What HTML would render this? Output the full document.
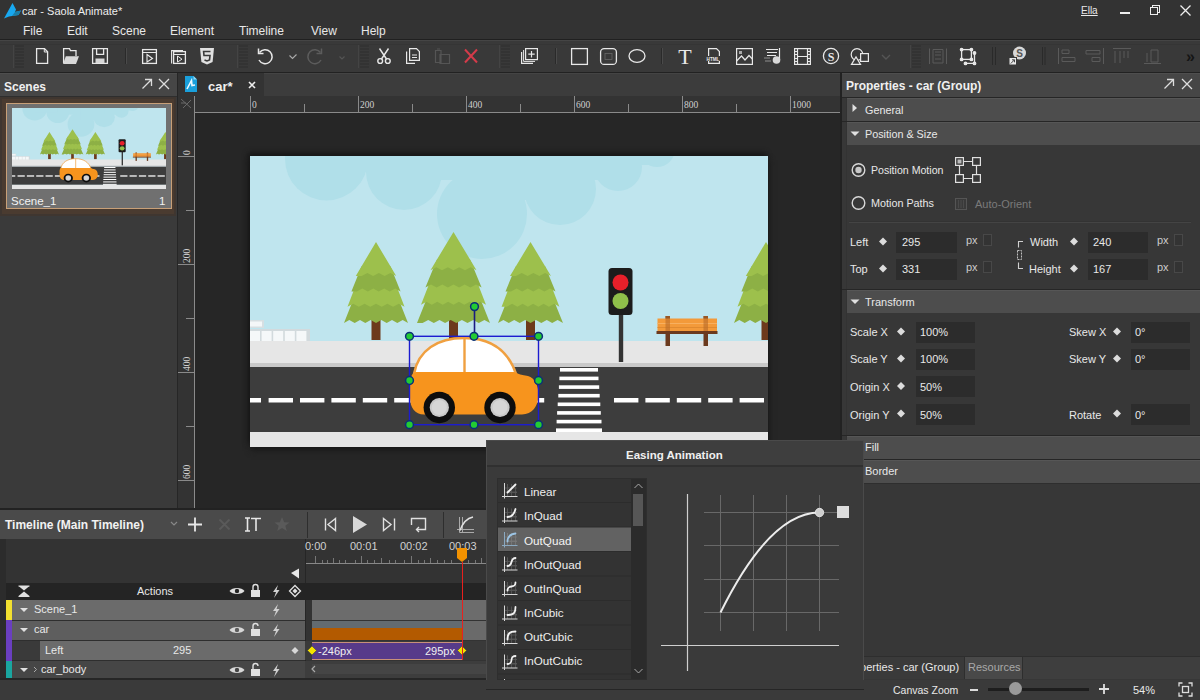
<!DOCTYPE html>
<html><head><meta charset="utf-8">
<style>
*{margin:0;padding:0;box-sizing:border-box}
html,body{width:1200px;height:700px;overflow:hidden;background:#333;font-family:"Liberation Sans",sans-serif;color:#e8e8e8;font-size:12px}
.a{position:absolute}
.t{position:absolute;white-space:nowrap;line-height:1}
svg{position:absolute;overflow:visible}
.b{font-weight:bold}
</style></head><body>
<!-- ===== title + menu ===== -->
<div class="a" style="left:0;top:0;width:1200px;height:40px;background:#333"></div>
<svg style="left:0;top:0" width="24" height="20"><path d="M12.5,3 L16,9.5 L15,12 L21,10.5 L18.5,15 L9,16.5 L4,18.5 Z" fill="#18a8f0"/><path d="M15,12 L21,10.5 L18.5,15 L12,16 Z" fill="#1b7fa8"/></svg>
<div class="t" style="left:22px;top:6px;font-size:11px;color:#eee">car - Saola Animate*</div>
<div class="t" style="left:23px;top:25px;font-size:12px">File</div>
<div class="t" style="left:67px;top:25px;font-size:12px">Edit</div>
<div class="t" style="left:112px;top:25px;font-size:12px">Scene</div>
<div class="t" style="left:170px;top:25px;font-size:12px">Element</div>
<div class="t" style="left:239px;top:25px;font-size:12px">Timeline</div>
<div class="t" style="left:311px;top:25px;font-size:12px">View</div>
<div class="t" style="left:361px;top:25px;font-size:12px">Help</div>
<div class="t" style="left:1081px;top:6px;font-size:10px;text-decoration:underline">Ella</div>
<div class="a" style="left:1120px;top:12px;width:10px;height:2px;background:#eee"></div>
<svg style="left:1150px;top:5px" width="11" height="11"><rect x="2.5" y="0.5" width="7" height="7" fill="none" stroke="#eee"/><rect x="0.5" y="2.5" width="7" height="7" fill="#333" stroke="#eee"/></svg>
<svg style="left:1180px;top:5px" width="11" height="11"><path d="M0.5,0.5 L10.5,10.5 M10.5,0.5 L0.5,10.5" stroke="#eee" stroke-width="1.3"/></svg>
<div class="a" style="left:0;top:39px;width:1200px;height:1px;background:#202020"></div>

<!-- ===== toolbar ===== -->
<div class="a" style="left:0;top:40px;width:1200px;height:33px;background:#393939;border-top:1px solid #454545;border-bottom:1px solid #222"></div>
<div class="a" style="left:0;top:44px;width:1200px;height:1px;background:#353535"></div>
<svg style="left:0;top:40px" width="1200" height="32" viewBox="0 40 1200 32">
<rect x="13" y="45" width="1" height="23" fill="#444444"/>
<rect x="15" y="45" width="9" height="23" fill="#333333"/>
<rect x="15" y="47" width="9" height="1" fill="#393939"/>
<rect x="15" y="50" width="9" height="1" fill="#393939"/>
<rect x="15" y="53" width="9" height="1" fill="#393939"/>
<rect x="15" y="56" width="9" height="1" fill="#393939"/>
<rect x="15" y="59" width="9" height="1" fill="#393939"/>
<rect x="15" y="62" width="9" height="1" fill="#393939"/>
<rect x="15" y="65" width="9" height="1" fill="#393939"/>
<rect x="237" y="45" width="1" height="23" fill="#444444"/>
<rect x="239" y="45" width="9" height="23" fill="#333333"/>
<rect x="239" y="47" width="9" height="1" fill="#393939"/>
<rect x="239" y="50" width="9" height="1" fill="#393939"/>
<rect x="239" y="53" width="9" height="1" fill="#393939"/>
<rect x="239" y="56" width="9" height="1" fill="#393939"/>
<rect x="239" y="59" width="9" height="1" fill="#393939"/>
<rect x="239" y="62" width="9" height="1" fill="#393939"/>
<rect x="239" y="65" width="9" height="1" fill="#393939"/>
<rect x="358" y="45" width="1" height="23" fill="#444444"/>
<rect x="360" y="45" width="9" height="23" fill="#333333"/>
<rect x="360" y="47" width="9" height="1" fill="#393939"/>
<rect x="360" y="50" width="9" height="1" fill="#393939"/>
<rect x="360" y="53" width="9" height="1" fill="#393939"/>
<rect x="360" y="56" width="9" height="1" fill="#393939"/>
<rect x="360" y="59" width="9" height="1" fill="#393939"/>
<rect x="360" y="62" width="9" height="1" fill="#393939"/>
<rect x="360" y="65" width="9" height="1" fill="#393939"/>
<rect x="499" y="45" width="1" height="23" fill="#444444"/>
<rect x="501" y="45" width="9" height="23" fill="#333333"/>
<rect x="501" y="47" width="9" height="1" fill="#393939"/>
<rect x="501" y="50" width="9" height="1" fill="#393939"/>
<rect x="501" y="53" width="9" height="1" fill="#393939"/>
<rect x="501" y="56" width="9" height="1" fill="#393939"/>
<rect x="501" y="59" width="9" height="1" fill="#393939"/>
<rect x="501" y="62" width="9" height="1" fill="#393939"/>
<rect x="501" y="65" width="9" height="1" fill="#393939"/>
<rect x="910" y="45" width="1" height="23" fill="#444444"/>
<rect x="912" y="45" width="9" height="23" fill="#333333"/>
<rect x="912" y="47" width="9" height="1" fill="#393939"/>
<rect x="912" y="50" width="9" height="1" fill="#393939"/>
<rect x="912" y="53" width="9" height="1" fill="#393939"/>
<rect x="912" y="56" width="9" height="1" fill="#393939"/>
<rect x="912" y="59" width="9" height="1" fill="#393939"/>
<rect x="912" y="62" width="9" height="1" fill="#393939"/>
<rect x="912" y="65" width="9" height="1" fill="#393939"/>
<g fill="none" stroke="#e8e8e8" stroke-width="1.3">
<!-- grip -->

<!-- new -->
<path d="M36.6,48.6 H44.5 L47.6,51.8 V63.4 H36.6 Z"/>
<path d="M44.3,48.6 V52 H47.6" stroke-width="1"/>
<!-- open -->
<path d="M63.6,63 V48.6 H69.5 L70.5,50.6 H76 V56"/>
<path d="M63,64 L65.8,56.2 H79 L76,64 Z" fill="#d8d8d8" stroke="none"/>
<!-- save -->
<path d="M92.6,48.6 H107.4 V63.4 H92.6 Z"/>
<path d="M96.6,48.6 V54.4 H103.6 V48.6"/>
<rect x="95.5" y="58.5" width="9" height="4.5" fill="#d8d8d8" stroke="none"/>
<path d="M125.5,48 V64" stroke="#2a2a2a" stroke-width="1"/><path d="M126.5,48 V64" stroke="#4a4a4a" stroke-width="1"/>
<!-- preview -->
<rect x="142.6" y="49.6" width="13.8" height="13.8"/>
<path d="M142.6,52.5 H156.4" stroke-width="1"/>
<path d="M147,54.5 L152.5,58.5 L147,62 Z" stroke-width="1.1"/>
<!-- preview2 -->
<path d="M171.6,63.4 V50.6 H183" stroke-width="1.1"/>
<rect x="173.6" y="51.6" width="11.8" height="11.8"/>
<path d="M173.6,54.5 H185.4" stroke-width="1"/>
<path d="M177.5,56 L182,59.2 L177.5,62 Z" stroke-width="1"/>
<!-- html5 -->
<path d="M200,48 H214 L212.6,62 L207,64.5 L201.4,62 Z" fill="#e0e0e0" stroke="none"/>
<path d="M210.5,51.5 H203.6 L204,55.5 H210 L209.5,60 L207,61 L204.5,60" stroke="#3a3a3a" stroke-width="1.6"/>
<!-- undo -->
<path d="M259.5,52.5 A7,7 0 1 1 259,60" stroke-width="1.5"/>
<path d="M258.5,48.5 V53.5 H263.5" stroke-width="1.5"/>
<path d="M289.5,55.5 L292.5,58.5 L296.5,54.5" stroke="#aaa" stroke-width="1.1"/>
<!-- redo disabled -->
<path d="M320.5,52.5 A7,7 0 1 0 321,60" stroke="#5c5c5c" stroke-width="1.5"/>
<path d="M321.5,48.5 V53.5 H316.5" stroke="#5c5c5c" stroke-width="1.5"/>
<path d="M339.5,56.5 L342,59 L344.5,56.5" stroke="#555" stroke-width="1.1"/>

<!-- cut -->
<path d="M379.5,48.5 L386.5,59 M388.5,48.5 L381.5,59" stroke-width="1.4"/>
<circle cx="380.2" cy="61" r="2.4" stroke-width="1.4"/>
<circle cx="387.8" cy="61" r="2.4" stroke-width="1.4"/>
<!-- copy -->
<path d="M406.6,51.5 V63.4 H415" stroke-width="1.2"/>
<path d="M409.6,48.6 H416.5 L419.4,51.5 V60.4 H409.6 Z" stroke-width="1.2"/>
<path d="M412,55 H417 M412,57.5 H417" stroke-width="1"/>
<!-- paste disabled -->
<path d="M435.5,50.5 H441 V62.5 H435.5 Z M440,54.5 H449.5 V63.5 H440 Z M437,49 H440" stroke="#555" stroke-width="1.2"/>
<!-- delete -->
<path d="M465,49.5 L477,62.5 M477,49.5 L465,62.5" stroke="#d43b4a" stroke-width="2"/>

<!-- duplicate -->
<path d="M521.6,52 V63.4 H533" stroke-width="1.2"/>
<path d="M523.6,50 V61.4 H535" stroke-width="1"/>
<rect x="525.6" y="48.6" width="11.8" height="11" stroke-width="1.2"/>
<path d="M531.5,51 V57.5 M528.3,54.2 H534.7" stroke-width="1.2"/>
<path d="M555.5,48 V64" stroke="#2a2a2a" stroke-width="1"/><path d="M556.5,48 V64" stroke="#4a4a4a" stroke-width="1"/>
<!-- rect -->
<rect x="571.6" y="48.6" width="15.8" height="15.8"/>
<!-- round rect -->
<rect x="600.6" y="48.6" width="15.8" height="15.8" rx="3.5"/>
<rect x="605" y="53.5" width="7" height="6" stroke="#666" stroke-width="0.8"/>
<!-- ellipse -->
<ellipse cx="637" cy="56" rx="8" ry="6.3"/>
<path d="M661.5,48 V64" stroke="#2a2a2a" stroke-width="1"/><path d="M662.5,48 V64" stroke="#4a4a4a" stroke-width="1"/>
</g>
<!-- T -->
<text x="685" y="64" font-family="Liberation Serif" font-size="22" fill="#e8e8e8" text-anchor="middle">T</text>
<g fill="none" stroke="#e8e8e8" stroke-width="1.2">
<!-- html doc -->
<path d="M708.6,63.4 V48.6 H716.5 L719.4,51.5 V63.4 Z"/>
<rect x="705" y="56" width="16" height="5" fill="#3a3a3a" stroke="none"/>
<text x="713" y="60.6" font-family="Liberation Sans" font-size="4.6" font-weight="bold" fill="#e8e8e8" stroke="none" text-anchor="middle">HTML</text>
<!-- image -->
<rect x="736.6" y="48.6" width="15.8" height="15.8"/>
<rect x="739" y="51" width="3" height="3" fill="#aaa" stroke="none"/>
<path d="M736.6,61 L741.5,56 L745,60 L749,55.5 L752.4,59" />
<!-- audio -->
<path d="M766,49.5 H778 M767,52.5 H777 M767,55.5 H776 M779.5,48 V60" stroke-width="1.2"/>
<circle cx="776.5" cy="60" r="3.8" fill="#d8d8d8" stroke="none"/>
<path d="M764,58 H770 M765,61 H771" stroke-width="0.9" stroke="#999"/>
<!-- video -->
<rect x="794.6" y="48.6" width="15.8" height="15.8"/>
<path d="M797.5,48.6 V64.4 M807.5,48.6 V64.4 M797.5,56.5 H807.5"/>
<path d="M794.6,51.5 H797.5 M794.6,54.5 H797.5 M794.6,58.5 H797.5 M794.6,61.5 H797.5 M807.5,51.5 H810.4 M807.5,54.5 H810.4 M807.5,58.5 H810.4 M807.5,61.5 H810.4" stroke-width="1"/>
<!-- symbol -->
<circle cx="831" cy="56" r="7.6" stroke-width="1.3"/>
</g>
<text x="831" y="60.5" font-family="Liberation Serif" font-size="12" font-weight="bold" fill="#e8e8e8" text-anchor="middle">S</text>
<g fill="none" stroke="#e8e8e8" stroke-width="1.2">
<!-- shapes -->
<circle cx="857" cy="54.5" r="5.8"/>
<rect x="860.6" y="53.6" width="7.8" height="7.8" fill="#3a3a3a"/>
<path d="M851.5,64.4 L856,57 L860.5,64.4 Z" fill="#3a3a3a"/>
<path d="M882,55 L886,59 L890,55" stroke="#555" stroke-width="1.4"/>

<!-- disabled icon -->
<path d="M929.5,48.5 V64 M946.5,48.5 V64 M933,49.5 H943 V63 H933 Z M935,52 H941 M935,55 H941 M935,59 H941" stroke="#5a5a5a" stroke-width="1"/>
<!-- transform -->
<rect x="961.6" y="49.6" width="9.8" height="9.8" stroke-width="1.3"/>
<path d="M974.5,53.5 V63.4 H965.5" stroke-width="1.3"/>
<circle cx="961.6" cy="49.6" r="1.3" fill="#e8e8e8"/><circle cx="971.4" cy="49.6" r="1.3" fill="#e8e8e8"/><circle cx="961.6" cy="59.4" r="1.3" fill="#e8e8e8"/><circle cx="971.4" cy="59.4" r="1.3" fill="#e8e8e8"/><circle cx="974.5" cy="53" r="1.3" fill="#e8e8e8"/><circle cx="974.5" cy="63.4" r="1.3" fill="#e8e8e8"/><circle cx="965.5" cy="63.4" r="1.3" fill="#e8e8e8"/>
<path d="M992.5,47 V65 M995.5,47 V65" stroke="#2a2a2a" stroke-width="1"/>
<!-- symbol link -->
<circle cx="1019.5" cy="53" r="6.5" fill="#d8d8d8" stroke="none"/>
<text x="1019.5" y="57" font-family="Liberation Sans" font-size="10" font-weight="bold" fill="#555" stroke="none" text-anchor="middle">S</text>
<rect x="1009" y="57.5" width="7.5" height="7.5" fill="#e8e8e8" stroke="#3a3a3a" stroke-width="1"/>
<path d="M1010.8,63.5 L1014.5,59.8 M1012,59.8 H1014.5 V62.3" stroke="#444" stroke-width="1"/>
<path d="M1042.5,47 V65 M1045,47 V65" stroke="#2a2a2a" stroke-width="1"/>
<!-- align disabled -->
<g stroke="#5a5a5a" stroke-width="1">
<path d="M1058.5,48 V64 M1062,50 H1069 V53.5 H1062 Z M1062,57.5 H1075 V61.5 H1062 Z"/>
<path d="M1103.5,48 V64 M1086,50.5 H1100 V54 H1086 Z M1092,57.5 H1100 V61.5 H1092 Z"/>
<path d="M1113,48.5 H1131 M1115,51 V63 M1120,51 V63 M1124,51 V58 M1128,51 V58"/>
<path d="M1144,63.5 H1161 M1147,53 V62 M1151,50 V62 H1158 V50 Z"/>
</g>
</g>
<text x="1186" y="62" font-family="Liberation Sans" font-size="16" font-weight="bold" fill="#151515">»</text>
</svg>


<!-- scenes panel -->
<div class="a" style="left:0;top:73px;width:177px;height:435px;background:#3a3a3a"></div>
<div class="a" style="left:0;top:73px;width:177px;height:23px;background:#464646;border-top:1px solid #4e4e4e"></div>
<div class="t b" style="left:4px;top:81px;font-size:12px;color:#f0f0f0">Scenes</div>
<svg style="left:141px;top:78px" width="12" height="12"><path d="M1.5,10.5 L10.5,1.5 M4,1.5 H10.5 V8" fill="none" stroke="#ddd" stroke-width="1.3"/></svg>
<svg style="left:158px;top:78px" width="12" height="12"><path d="M1,1 L11,11 M11,1 L1,11" fill="none" stroke="#ddd" stroke-width="1.3"/></svg>
<div class="a" style="left:0;top:96px;width:177px;height:1px;background:#2e2e2e"></div>
<div class="a" style="left:0;top:97px;width:176px;height:119px;background:#3f3630"></div>
<div class="a" style="left:2px;top:99px;width:172px;height:115px;background:#4a3b30"></div>
<div class="a" style="left:6px;top:103px;width:166px;height:106px;border:1px solid #c8a078;background:#707070"></div>
<svg style="left:12px;top:108px" width="154" height="81" viewBox="250 156 518 291" preserveAspectRatio="none"><svg x="250" y="156" width="518" height="291" viewBox="250 156 518 291" style="overflow:hidden"><rect x="250" y="156" width="518" height="291" fill="#bfe5ee"/><circle cx="326.5" cy="159" r="41.5" fill="#b0dfe9"/><circle cx="404" cy="172" r="38" fill="#b0dfe9"/><circle cx="482" cy="214" r="45" fill="#b0dfe9"/><circle cx="560" cy="189" r="36" fill="#b0dfe9"/><circle cx="618" cy="167" r="24" fill="#b0dfe9"/><circle cx="657" cy="149" r="18" fill="#b0dfe9"/><rect x="326" y="156" width="78" height="16" fill="#b0dfe9"/><rect x="404" y="156" width="78" height="24" fill="#b0dfe9"/><rect x="482" y="156" width="78" height="44" fill="#b0dfe9"/><rect x="560" y="156" width="58" height="24" fill="#b0dfe9"/><rect x="618" y="156" width="39" height="9" fill="#b0dfe9"/><rect x="371.5" y="318" width="9" height="22" fill="#6d3a1c"/><rect x="449.0" y="318" width="9" height="22" fill="#6d3a1c"/><rect x="526.0" y="318" width="9" height="22" fill="#6d3a1c"/><rect x="761.5" y="318" width="9" height="22" fill="#6d3a1c"/><polygon fill="#8db045" points="353.6,298.7 398.4,298.7 408.0,323.0 402.7,320.0 397.3,323.0 392.0,320.0 386.7,323.0 381.3,320.0 376.0,323.0 370.7,320.0 365.3,323.0 360.0,320.0 354.7,323.0 349.3,320.0 344.0,323.0"/><polygon fill="#9dc04c" points="356.8,282.5 395.2,282.5 404.5,306.8 398.8,303.8 393.1,306.8 387.4,303.8 381.7,306.8 376.0,303.8 370.3,306.8 364.6,303.8 358.9,306.8 353.2,303.8 347.5,306.8"/><polygon fill="#8db045" points="361.6,266.3 390.4,266.3 400.6,291.4 395.2,288.4 389.7,291.4 384.2,288.4 378.7,291.4 373.3,288.4 367.8,291.4 362.3,288.4 356.8,291.4 351.4,291.4"/><polygon fill="#9dc04c" points="376.0,242.0 376.0,242.0 396.2,276.0 390.4,273.0 384.6,276.0 378.9,273.0 373.1,276.0 367.4,273.0 361.6,276.0 355.8,276.0"/><polygon fill="#8db045" points="427.9,295.7 479.1,295.7 490.0,323.0 484.4,320.0 478.8,323.0 473.2,320.0 467.5,323.0 461.9,320.0 456.3,323.0 450.7,320.0 445.1,323.0 439.5,320.0 433.8,323.0 428.2,320.0 422.6,323.0 417.0,323.0"/><polygon fill="#9dc04c" points="431.6,277.5 475.4,277.5 486.0,304.8 480.6,301.8 475.2,304.8 469.7,301.8 464.3,304.8 458.9,301.8 453.5,304.8 448.1,301.8 442.7,304.8 437.3,301.8 431.8,304.8 426.4,301.8 421.0,304.8"/><polygon fill="#8db045" points="437.1,259.3 469.9,259.3 481.6,287.5 476.0,284.5 470.4,287.5 464.7,284.5 459.1,287.5 453.5,284.5 447.9,287.5 442.3,284.5 436.6,287.5 431.0,284.5 425.4,287.5"/><polygon fill="#9dc04c" points="453.5,232.0 453.5,232.0 476.5,270.2 470.7,267.2 465.0,270.2 459.2,267.2 453.5,270.2 447.8,267.2 442.0,270.2 436.3,267.2 430.5,270.2"/><polygon fill="#8db045" points="507.8,298.7 553.2,298.7 563.0,323.0 557.6,320.0 552.2,323.0 546.8,320.0 541.3,323.0 535.9,320.0 530.5,323.0 525.1,320.0 519.7,323.0 514.2,320.0 508.8,323.0 503.4,320.0 498.0,323.0"/><polygon fill="#9dc04c" points="511.0,282.5 550.0,282.5 559.4,306.8 554.2,303.8 548.9,306.8 543.6,303.8 538.4,306.8 533.1,303.8 527.9,306.8 522.6,303.8 517.4,306.8 512.1,303.8 506.8,306.8 501.6,306.8"/><polygon fill="#8db045" points="515.9,266.3 545.1,266.3 555.5,291.4 550.0,288.4 544.4,291.4 538.8,288.4 533.3,291.4 527.7,288.4 522.2,291.4 516.6,288.4 511.0,291.4 505.5,291.4"/><polygon fill="#9dc04c" points="530.5,242.0 530.5,242.0 551.0,276.0 545.1,273.0 539.3,276.0 533.4,273.0 527.6,276.0 521.7,273.0 515.9,276.0 510.0,276.0"/><polygon fill="#8db045" points="743.6,298.7 788.4,298.7 798.0,323.0 792.7,320.0 787.3,323.0 782.0,320.0 776.7,323.0 771.3,320.0 766.0,323.0 760.7,320.0 755.3,323.0 750.0,320.0 744.7,323.0 739.3,320.0 734.0,323.0"/><polygon fill="#9dc04c" points="746.8,282.5 785.2,282.5 794.5,306.8 788.8,303.8 783.1,306.8 777.4,303.8 771.7,306.8 766.0,303.8 760.3,306.8 754.6,303.8 748.9,306.8 743.2,303.8 737.5,306.8"/><polygon fill="#8db045" points="751.6,266.3 780.4,266.3 790.6,291.4 785.2,288.4 779.7,291.4 774.2,288.4 768.7,291.4 763.3,288.4 757.8,291.4 752.3,288.4 746.8,291.4 741.4,291.4"/><polygon fill="#9dc04c" points="766.0,242.0 766.0,242.0 786.2,276.0 780.4,273.0 774.6,276.0 768.9,273.0 763.1,276.0 757.4,273.0 751.6,276.0 745.8,276.0"/><rect x="250" y="320" width="14" height="8" fill="#d6dfe2"/><rect x="250" y="321.5" width="12" height="5" fill="#f4f7f8"/><rect x="250" y="329" width="60" height="16" fill="#d2dadd"/><rect x="250.0" y="331" width="10" height="12" fill="#f5f8f9"/><rect x="261.6" y="331" width="10" height="12" fill="#f5f8f9"/><rect x="273.2" y="331" width="10" height="12" fill="#f5f8f9"/><rect x="284.8" y="331" width="10" height="12" fill="#f5f8f9"/><rect x="296.4" y="331" width="10" height="12" fill="#f5f8f9"/><rect x="250" y="341" width="518" height="23" fill="#e6e6e6"/><rect x="250" y="363" width="518" height="4" fill="#c9c9c9"/><rect x="250" y="367" width="518" height="65" fill="#3d3d3d"/><rect x="250" y="432" width="518" height="15" fill="#e6e6e6"/><rect x="250" y="398" width="11" height="4.5" fill="#fff"/><rect x="268.6" y="398" width="24.4" height="4.5" fill="#fff"/><rect x="300.0" y="398" width="24.4" height="4.5" fill="#fff"/><rect x="331.4" y="398" width="24.4" height="4.5" fill="#fff"/><rect x="362.8" y="398" width="24.4" height="4.5" fill="#fff"/><rect x="394.2" y="398" width="24.4" height="4.5" fill="#fff"/><rect x="425.6" y="398" width="24.4" height="4.5" fill="#fff"/><rect x="457.0" y="398" width="24.4" height="4.5" fill="#fff"/><rect x="488.4" y="398" width="24.4" height="4.5" fill="#fff"/><rect x="519.8" y="398" width="24.4" height="4.5" fill="#fff"/><rect x="614.0" y="398" width="24.4" height="4.5" fill="#fff"/><rect x="645.4" y="398" width="24.4" height="4.5" fill="#fff"/><rect x="676.8" y="398" width="24.4" height="4.5" fill="#fff"/><rect x="708.2" y="398" width="24.4" height="4.5" fill="#fff"/><rect x="739.6" y="398" width="24.4" height="4.5" fill="#fff"/><rect x="560.0" y="368.0" width="38.0" height="3.6" fill="#fff"/><rect x="559.4" y="376.6" width="39.1" height="3.6" fill="#fff"/><rect x="558.9" y="385.3" width="40.3" height="3.6" fill="#fff"/><rect x="558.3" y="393.9" width="41.4" height="3.6" fill="#fff"/><rect x="557.7" y="402.5" width="42.6" height="3.6" fill="#fff"/><rect x="557.1" y="411.1" width="43.7" height="3.6" fill="#fff"/><rect x="556.6" y="419.8" width="44.9" height="3.6" fill="#fff"/><rect x="556.0" y="428.4" width="46.0" height="3.6" fill="#fff"/><rect x="618.8" y="300" width="4.4" height="62" fill="#333"/><rect x="608.5" y="268" width="24" height="47" rx="3.5" fill="#1c1c1c"/><circle cx="620.5" cy="282.5" r="8" fill="#e8202a"/><circle cx="620.5" cy="301" r="8" fill="#8fbf4a"/><rect x="665.5" y="316" width="4.5" height="30" fill="#6b3a1e"/><rect x="703.5" y="316" width="4.5" height="30" fill="#6b3a1e"/><rect x="657.5" y="318.5" width="59.5" height="13" fill="#f39a3a"/><rect x="657.5" y="323" width="59.5" height="1" fill="#f7b060"/><rect x="657.5" y="327" width="59.5" height="1" fill="#e08a30"/><rect x="665.5" y="316" width="4.5" height="17" fill="#b86a28" opacity="0.6"/><rect x="703.5" y="316" width="4.5" height="17" fill="#b86a28" opacity="0.6"/><rect x="656.5" y="331" width="61" height="3" fill="#6b3a1e"/><path d="M414,374 C418,350 438,338 464,338 C490,338 508,350 516,374 Z" fill="#fff" stroke="#f0a040" stroke-width="2.5"/><rect x="463.3" y="338" width="2.4" height="36" fill="#f0a040"/><path d="M416,372 L514,372 C518,374 522,375 528,376 C535,378 538.5,386 538.5,395 C538.5,406 532,414.5 522,414.5 L424,414.5 C415,414.5 410,407 410,398 L410,384 C410,377 412,373 416,372 Z" fill="#f7941d"/><circle cx="439.3" cy="407.5" r="15.7" fill="#0d0d0d"/><circle cx="439.3" cy="407.5" r="9.6" fill="#c9c9c9"/><circle cx="439.3" cy="407.5" r="7.5" fill="#d6d6d6"/><circle cx="500" cy="407.5" r="15.7" fill="#0d0d0d"/><circle cx="500" cy="407.5" r="9.6" fill="#c9c9c9"/><circle cx="500" cy="407.5" r="7.5" fill="#d6d6d6"/></svg></svg>
<div class="t" style="left:11px;top:196px;font-size:11.5px;color:#f2f2f2">Scene_1</div>
<div class="t" style="left:159px;top:196px;font-size:11.5px;color:#f2f2f2">1</div>

<!-- doc tab bar -->
<div class="a" style="left:177px;top:73px;width:1px;height:435px;background:#262626"></div>
<div class="a" style="left:178px;top:73px;width:663px;height:23px;background:#3c3c3c;border-top:1px solid #444"></div>
<div class="a" style="left:178px;top:73px;width:86px;height:23px;background:#333"></div>
<svg style="left:185px;top:76px" width="12" height="16" viewBox="0 0 12 16"><path d="M0,0 H8.5 L12,3.5 V16 H0 Z" fill="#1aa0dc"/><path d="M8.5,0 V3.5 H12" fill="#8fd6f5"/><path d="M2,13 L6.5,4.5 L7,9.5 L10,9" fill="none" stroke="#eaf8ff" stroke-width="1.6"/></svg>
<div class="t b" style="left:208px;top:80px;font-size:13px;color:#f0f0f0">car*</div>
<svg style="left:248px;top:81px" width="8" height="8"><path d="M1,1 L7,7 M7,1 L1,7" stroke="#eee" stroke-width="1.6"/></svg>
<!-- rulers -->
<div class="a" style="left:178px;top:96px;width:663px;height:16px;background:#333"></div>
<div class="a" style="left:178px;top:96px;width:17px;height:412px;background:#333"></div>
<div class="a" style="left:195px;top:112px;width:646px;height:1px;background:#8a8a8a"></div>
<div class="a" style="left:194px;top:96px;width:1px;height:412px;background:#8a8a8a"></div>
<svg style="left:0;top:0" width="1200" height="700">
<g stroke="#8a8a8a" stroke-width="1">
<path d="M181,99 L191,108 M183,108 L191,100 M181,103 H186" stroke="#6a6a6a"/>
<path d="M250.5,96 V112 M358.5,96 V112 M466.5,96 V112 M574.5,96 V112 M682.5,96 V112 M790.5,96 V112"/>
<path d="M304.5,104 V112 M412.5,104 V112 M520.5,104 V112 M628.5,104 V112 M736.5,104 V112"/>
<path d="M178,156.5 H194 M178,264.5 H194 M178,372.5 H194 M178,480.5 H194"/>
<path d="M186,210.5 H194 M186,318.5 H194 M186,426.5 H194"/>
</g>
<g font-family="Liberation Serif" font-size="9.5" fill="#cfcfcf">
<text x="252" y="108">0</text><text x="360" y="108">200</text><text x="468" y="108">400</text><text x="576" y="108">600</text><text x="684" y="108">800</text><text x="792" y="108">1000</text>
<text transform="translate(190,155) rotate(-90)">0</text>
<text transform="translate(190,263) rotate(-90)">200</text>
<text transform="translate(190,371) rotate(-90)">400</text>
<text transform="translate(190,479) rotate(-90)">600</text>
</g>
</svg>
<!-- canvas -->
<div class="a" style="left:195px;top:113px;width:646px;height:395px;background:#262626"></div>
<div class="a" style="left:250px;top:156px;width:518px;height:291px;box-shadow:-2px -3px 5px #161616, 1px 4px 6px #1c1c1c"></div>
<svg style="left:0;top:0" width="1200" height="700" viewBox="0 0 1200 700">
<svg x="250" y="156" width="518" height="291" viewBox="250 156 518 291" style="overflow:hidden"><rect x="250" y="156" width="518" height="291" fill="#bfe5ee"/><circle cx="326.5" cy="159" r="41.5" fill="#b0dfe9"/><circle cx="404" cy="172" r="38" fill="#b0dfe9"/><circle cx="482" cy="214" r="45" fill="#b0dfe9"/><circle cx="560" cy="189" r="36" fill="#b0dfe9"/><circle cx="618" cy="167" r="24" fill="#b0dfe9"/><circle cx="657" cy="149" r="18" fill="#b0dfe9"/><rect x="326" y="156" width="78" height="16" fill="#b0dfe9"/><rect x="404" y="156" width="78" height="24" fill="#b0dfe9"/><rect x="482" y="156" width="78" height="44" fill="#b0dfe9"/><rect x="560" y="156" width="58" height="24" fill="#b0dfe9"/><rect x="618" y="156" width="39" height="9" fill="#b0dfe9"/><rect x="371.5" y="318" width="9" height="22" fill="#6d3a1c"/><rect x="449.0" y="318" width="9" height="22" fill="#6d3a1c"/><rect x="526.0" y="318" width="9" height="22" fill="#6d3a1c"/><rect x="761.5" y="318" width="9" height="22" fill="#6d3a1c"/><polygon fill="#8db045" points="353.6,298.7 398.4,298.7 408.0,323.0 402.7,320.0 397.3,323.0 392.0,320.0 386.7,323.0 381.3,320.0 376.0,323.0 370.7,320.0 365.3,323.0 360.0,320.0 354.7,323.0 349.3,320.0 344.0,323.0"/><polygon fill="#9dc04c" points="356.8,282.5 395.2,282.5 404.5,306.8 398.8,303.8 393.1,306.8 387.4,303.8 381.7,306.8 376.0,303.8 370.3,306.8 364.6,303.8 358.9,306.8 353.2,303.8 347.5,306.8"/><polygon fill="#8db045" points="361.6,266.3 390.4,266.3 400.6,291.4 395.2,288.4 389.7,291.4 384.2,288.4 378.7,291.4 373.3,288.4 367.8,291.4 362.3,288.4 356.8,291.4 351.4,291.4"/><polygon fill="#9dc04c" points="376.0,242.0 376.0,242.0 396.2,276.0 390.4,273.0 384.6,276.0 378.9,273.0 373.1,276.0 367.4,273.0 361.6,276.0 355.8,276.0"/><polygon fill="#8db045" points="427.9,295.7 479.1,295.7 490.0,323.0 484.4,320.0 478.8,323.0 473.2,320.0 467.5,323.0 461.9,320.0 456.3,323.0 450.7,320.0 445.1,323.0 439.5,320.0 433.8,323.0 428.2,320.0 422.6,323.0 417.0,323.0"/><polygon fill="#9dc04c" points="431.6,277.5 475.4,277.5 486.0,304.8 480.6,301.8 475.2,304.8 469.7,301.8 464.3,304.8 458.9,301.8 453.5,304.8 448.1,301.8 442.7,304.8 437.3,301.8 431.8,304.8 426.4,301.8 421.0,304.8"/><polygon fill="#8db045" points="437.1,259.3 469.9,259.3 481.6,287.5 476.0,284.5 470.4,287.5 464.7,284.5 459.1,287.5 453.5,284.5 447.9,287.5 442.3,284.5 436.6,287.5 431.0,284.5 425.4,287.5"/><polygon fill="#9dc04c" points="453.5,232.0 453.5,232.0 476.5,270.2 470.7,267.2 465.0,270.2 459.2,267.2 453.5,270.2 447.8,267.2 442.0,270.2 436.3,267.2 430.5,270.2"/><polygon fill="#8db045" points="507.8,298.7 553.2,298.7 563.0,323.0 557.6,320.0 552.2,323.0 546.8,320.0 541.3,323.0 535.9,320.0 530.5,323.0 525.1,320.0 519.7,323.0 514.2,320.0 508.8,323.0 503.4,320.0 498.0,323.0"/><polygon fill="#9dc04c" points="511.0,282.5 550.0,282.5 559.4,306.8 554.2,303.8 548.9,306.8 543.6,303.8 538.4,306.8 533.1,303.8 527.9,306.8 522.6,303.8 517.4,306.8 512.1,303.8 506.8,306.8 501.6,306.8"/><polygon fill="#8db045" points="515.9,266.3 545.1,266.3 555.5,291.4 550.0,288.4 544.4,291.4 538.8,288.4 533.3,291.4 527.7,288.4 522.2,291.4 516.6,288.4 511.0,291.4 505.5,291.4"/><polygon fill="#9dc04c" points="530.5,242.0 530.5,242.0 551.0,276.0 545.1,273.0 539.3,276.0 533.4,273.0 527.6,276.0 521.7,273.0 515.9,276.0 510.0,276.0"/><polygon fill="#8db045" points="743.6,298.7 788.4,298.7 798.0,323.0 792.7,320.0 787.3,323.0 782.0,320.0 776.7,323.0 771.3,320.0 766.0,323.0 760.7,320.0 755.3,323.0 750.0,320.0 744.7,323.0 739.3,320.0 734.0,323.0"/><polygon fill="#9dc04c" points="746.8,282.5 785.2,282.5 794.5,306.8 788.8,303.8 783.1,306.8 777.4,303.8 771.7,306.8 766.0,303.8 760.3,306.8 754.6,303.8 748.9,306.8 743.2,303.8 737.5,306.8"/><polygon fill="#8db045" points="751.6,266.3 780.4,266.3 790.6,291.4 785.2,288.4 779.7,291.4 774.2,288.4 768.7,291.4 763.3,288.4 757.8,291.4 752.3,288.4 746.8,291.4 741.4,291.4"/><polygon fill="#9dc04c" points="766.0,242.0 766.0,242.0 786.2,276.0 780.4,273.0 774.6,276.0 768.9,273.0 763.1,276.0 757.4,273.0 751.6,276.0 745.8,276.0"/><rect x="250" y="320" width="14" height="8" fill="#d6dfe2"/><rect x="250" y="321.5" width="12" height="5" fill="#f4f7f8"/><rect x="250" y="329" width="60" height="16" fill="#d2dadd"/><rect x="250.0" y="331" width="10" height="12" fill="#f5f8f9"/><rect x="261.6" y="331" width="10" height="12" fill="#f5f8f9"/><rect x="273.2" y="331" width="10" height="12" fill="#f5f8f9"/><rect x="284.8" y="331" width="10" height="12" fill="#f5f8f9"/><rect x="296.4" y="331" width="10" height="12" fill="#f5f8f9"/><rect x="250" y="341" width="518" height="23" fill="#e6e6e6"/><rect x="250" y="363" width="518" height="4" fill="#c9c9c9"/><rect x="250" y="367" width="518" height="65" fill="#3d3d3d"/><rect x="250" y="432" width="518" height="15" fill="#e6e6e6"/><rect x="250" y="398" width="11" height="4.5" fill="#fff"/><rect x="268.6" y="398" width="24.4" height="4.5" fill="#fff"/><rect x="300.0" y="398" width="24.4" height="4.5" fill="#fff"/><rect x="331.4" y="398" width="24.4" height="4.5" fill="#fff"/><rect x="362.8" y="398" width="24.4" height="4.5" fill="#fff"/><rect x="394.2" y="398" width="24.4" height="4.5" fill="#fff"/><rect x="425.6" y="398" width="24.4" height="4.5" fill="#fff"/><rect x="457.0" y="398" width="24.4" height="4.5" fill="#fff"/><rect x="488.4" y="398" width="24.4" height="4.5" fill="#fff"/><rect x="519.8" y="398" width="24.4" height="4.5" fill="#fff"/><rect x="614.0" y="398" width="24.4" height="4.5" fill="#fff"/><rect x="645.4" y="398" width="24.4" height="4.5" fill="#fff"/><rect x="676.8" y="398" width="24.4" height="4.5" fill="#fff"/><rect x="708.2" y="398" width="24.4" height="4.5" fill="#fff"/><rect x="739.6" y="398" width="24.4" height="4.5" fill="#fff"/><rect x="560.0" y="368.0" width="38.0" height="3.6" fill="#fff"/><rect x="559.4" y="376.6" width="39.1" height="3.6" fill="#fff"/><rect x="558.9" y="385.3" width="40.3" height="3.6" fill="#fff"/><rect x="558.3" y="393.9" width="41.4" height="3.6" fill="#fff"/><rect x="557.7" y="402.5" width="42.6" height="3.6" fill="#fff"/><rect x="557.1" y="411.1" width="43.7" height="3.6" fill="#fff"/><rect x="556.6" y="419.8" width="44.9" height="3.6" fill="#fff"/><rect x="556.0" y="428.4" width="46.0" height="3.6" fill="#fff"/><rect x="618.8" y="300" width="4.4" height="62" fill="#333"/><rect x="608.5" y="268" width="24" height="47" rx="3.5" fill="#1c1c1c"/><circle cx="620.5" cy="282.5" r="8" fill="#e8202a"/><circle cx="620.5" cy="301" r="8" fill="#8fbf4a"/><rect x="665.5" y="316" width="4.5" height="30" fill="#6b3a1e"/><rect x="703.5" y="316" width="4.5" height="30" fill="#6b3a1e"/><rect x="657.5" y="318.5" width="59.5" height="13" fill="#f39a3a"/><rect x="657.5" y="323" width="59.5" height="1" fill="#f7b060"/><rect x="657.5" y="327" width="59.5" height="1" fill="#e08a30"/><rect x="665.5" y="316" width="4.5" height="17" fill="#b86a28" opacity="0.6"/><rect x="703.5" y="316" width="4.5" height="17" fill="#b86a28" opacity="0.6"/><rect x="656.5" y="331" width="61" height="3" fill="#6b3a1e"/><path d="M414,374 C418,350 438,338 464,338 C490,338 508,350 516,374 Z" fill="#fff" stroke="#f0a040" stroke-width="2.5"/><rect x="463.3" y="338" width="2.4" height="36" fill="#f0a040"/><path d="M416,372 L514,372 C518,374 522,375 528,376 C535,378 538.5,386 538.5,395 C538.5,406 532,414.5 522,414.5 L424,414.5 C415,414.5 410,407 410,398 L410,384 C410,377 412,373 416,372 Z" fill="#f7941d"/><circle cx="439.3" cy="407.5" r="15.7" fill="#0d0d0d"/><circle cx="439.3" cy="407.5" r="9.6" fill="#c9c9c9"/><circle cx="439.3" cy="407.5" r="7.5" fill="#d6d6d6"/><circle cx="500" cy="407.5" r="15.7" fill="#0d0d0d"/><circle cx="500" cy="407.5" r="9.6" fill="#c9c9c9"/><circle cx="500" cy="407.5" r="7.5" fill="#d6d6d6"/></svg>
<rect x="409.5" y="336.3" width="129" height="88.4" fill="none" stroke="#1c1cd0" stroke-width="1.4"/><line x1="474.5" y1="306.6" x2="474.5" y2="336.3" stroke="#1a1a80" stroke-width="1.6"/><circle cx="409.5" cy="336.3" r="3.9" fill="#22cc33" stroke="#0b2f78" stroke-width="1.5"/><circle cx="474" cy="336.3" r="3.9" fill="#22cc33" stroke="#0b2f78" stroke-width="1.5"/><circle cx="538.5" cy="336.3" r="3.9" fill="#22cc33" stroke="#0b2f78" stroke-width="1.5"/><circle cx="409.5" cy="380.5" r="3.9" fill="#22cc33" stroke="#0b2f78" stroke-width="1.5"/><circle cx="538.5" cy="380.5" r="3.9" fill="#22cc33" stroke="#0b2f78" stroke-width="1.5"/><circle cx="409.5" cy="424.7" r="3.9" fill="#22cc33" stroke="#0b2f78" stroke-width="1.5"/><circle cx="474" cy="424.7" r="3.9" fill="#22cc33" stroke="#0b2f78" stroke-width="1.5"/><circle cx="538.5" cy="424.7" r="3.9" fill="#22cc33" stroke="#0b2f78" stroke-width="1.5"/><circle cx="474.5" cy="306.6" r="3.9" fill="#22cc33" stroke="#0b2f78" stroke-width="1.5"/>
</svg>

<!-- properties panel -->
<div class="a" style="left:840px;top:73px;width:2px;height:607px;background:#222"></div>
<div class="a" style="left:842px;top:73px;width:358px;height:607px;background:#373737"></div>
<div class="a" style="left:842px;top:73px;width:358px;height:24px;background:#464646;border-top:1px solid #4e4e4e"></div>
<div class="t b" style="left:846px;top:80px;font-size:12px;color:#f0f0f0">Properties - car (Group)</div>
<svg style="left:1163px;top:78px" width="12" height="12"><path d="M1.5,10.5 L10.5,1.5 M4,1.5 H10.5 V8" fill="none" stroke="#ddd" stroke-width="1.3"/></svg>
<svg style="left:1181px;top:78px" width="12" height="12"><path d="M1,1 L11,11 M11,1 L1,11" fill="none" stroke="#ddd" stroke-width="1.3"/></svg>
<div class="a" style="left:842px;top:97px;width:358px;height:1px;background:#262626"></div>
<div class="a" style="left:846px;top:98px;width:1px;height:558px;background:#333"></div>
<!-- section headers -->
<div class="a" style="left:847px;top:98px;width:353px;height:23px;background:#4d4d4d;border-top:1px solid #565656"></div>
<div class="a" style="left:842px;top:121px;width:358px;height:1px;background:#262626"></div>
<div class="a" style="left:847px;top:122px;width:353px;height:23px;background:#4d4d4d;border-top:1px solid #565656"></div>
<svg style="left:850px;top:103px" width="10" height="10"><path d="M2.5,1 L7,5 L2.5,9 Z" fill="#e0e0e0"/></svg>
<svg style="left:850px;top:129px" width="10" height="10"><path d="M0.5,2.5 H9.5 L5,7 Z" fill="#e0e0e0"/></svg>
<div class="t" style="left:865px;top:105px;font-size:10.8px">General</div>
<div class="t" style="left:865px;top:129px;font-size:10.8px">Position &amp; Size</div>
<!-- radios -->
<svg style="left:850px;top:161px" width="18" height="18"><circle cx="8.5" cy="9" r="6.3" fill="#373737" stroke="#d8d8d8" stroke-width="1.4"/><circle cx="8.5" cy="9" r="3.2" fill="#c8c8c8"/></svg>
<svg style="left:850px;top:194px" width="18" height="18"><circle cx="8.5" cy="9" r="6.3" fill="#373737" stroke="#d8d8d8" stroke-width="1.4"/></svg>
<div class="t" style="left:871px;top:165px;font-size:10.6px">Position Motion</div>
<div class="t" style="left:871px;top:198px;font-size:10.8px">Motion Paths</div>
<svg style="left:954px;top:156px" width="28" height="28"><g fill="none" stroke="#e0e0e0" stroke-width="1.2"><rect x="1.6" y="1.6" width="7.8" height="7.8"/><rect x="18.6" y="1.6" width="7.8" height="7.8"/><rect x="1.6" y="18.6" width="7.8" height="7.8"/><rect x="18.6" y="18.6" width="7.8" height="7.8"/><path d="M9.4,5.5 H18.6 M9.4,22.5 H18.6 M5.5,9.4 V18.6 M22.5,9.4 V18.6"/></g><rect x="3.5" y="3.5" width="4" height="4" fill="#bbb"/></svg>
<svg style="left:954px;top:197px" width="14" height="14"><rect x="1.5" y="1.5" width="11" height="11" fill="#3a3a3a" stroke="#555" stroke-width="1"/><path d="M4.5,3 V11 M7,3 V11 M9.5,3 V11" stroke="#4a4a4a"/></svg>
<div class="t" style="left:975px;top:199px;font-size:11px;color:#7a7a7a">Auto-Orient</div>
<div class="a" style="left:849px;top:221px;width:342px;height:1px;background:#333"></div>
<div class="a" style="left:849px;top:222px;width:342px;height:1px;background:#444"></div>
<!-- left/top/width/height -->
<div class="t" style="left:850px;top:237px;font-size:11px">Left</div>
<div class="t" style="left:850px;top:264px;font-size:11px">Top</div>
<div class="t" style="left:1030px;top:237px;font-size:11px">Width</div>
<div class="t" style="left:1029px;top:264px;font-size:11px">Height</div>
<div class="a" style="left:896px;top:232px;width:61px;height:21px;background:#2c2c2c"></div>
<div class="a" style="left:896px;top:259px;width:61px;height:21px;background:#2c2c2c"></div>
<div class="a" style="left:1088px;top:232px;width:60px;height:21px;background:#2c2c2c"></div>
<div class="a" style="left:1088px;top:259px;width:60px;height:21px;background:#2c2c2c"></div>
<div class="t" style="left:902px;top:237px;font-size:11px">295</div>
<div class="t" style="left:902px;top:264px;font-size:11px">331</div>
<div class="t" style="left:1093px;top:237px;font-size:11px">240</div>
<div class="t" style="left:1093px;top:264px;font-size:11px">167</div>
<div class="t" style="left:966px;top:235px;font-size:11px;color:#ccc">px</div>
<div class="t" style="left:966px;top:262px;font-size:11px;color:#ccc">px</div>
<div class="t" style="left:1157px;top:235px;font-size:11px;color:#ccc">px</div>
<div class="t" style="left:1157px;top:262px;font-size:11px;color:#ccc">px</div>
<div class="a" style="left:983px;top:234px;width:9px;height:12px;background:#333;border:1px solid #484848"></div>
<div class="a" style="left:983px;top:261px;width:9px;height:12px;background:#333;border:1px solid #484848"></div>
<div class="a" style="left:1174px;top:234px;width:9px;height:12px;background:#333;border:1px solid #484848"></div>
<div class="a" style="left:1174px;top:261px;width:9px;height:12px;background:#333;border:1px solid #484848"></div>
<svg style="left:1014px;top:238px" width="12" height="34"><path d="M9,3.5 H4.5 V9.5 M4.5,24.5 V30.5 H9" fill="none" stroke="#d0d0d0" stroke-width="1.1"/><path d="M3.5,12.5 H7.5 V21.5 H3.5 Z" fill="none" stroke="#c0c0c0" stroke-width="1" stroke-dasharray="2,1"/></svg>
<!-- transform -->
<div class="a" style="left:842px;top:289px;width:358px;height:1px;background:#262626"></div>
<div class="a" style="left:847px;top:290px;width:353px;height:23px;background:#4d4d4d;border-top:1px solid #565656"></div>
<svg style="left:850px;top:297px" width="10" height="10"><path d="M0.5,2.5 H9.5 L5,7 Z" fill="#e0e0e0"/></svg>
<div class="t" style="left:865px;top:297px;font-size:11px">Transform</div>
<div class="t" style="left:850px;top:327px;font-size:11px">Scale X</div>
<div class="t" style="left:850px;top:354px;font-size:11px">Scale Y</div>
<div class="t" style="left:850px;top:382px;font-size:11px">Origin X</div>
<div class="t" style="left:850px;top:410px;font-size:11px">Origin Y</div>
<div class="t" style="left:1069px;top:327px;font-size:11px">Skew X</div>
<div class="t" style="left:1069px;top:354px;font-size:11px">Skew Y</div>
<div class="t" style="left:1069px;top:410px;font-size:11px">Rotate</div>
<div class="a" style="left:916px;top:322px;width:59px;height:21px;background:#2c2c2c"></div>
<div class="a" style="left:916px;top:349px;width:59px;height:21px;background:#2c2c2c"></div>
<div class="a" style="left:916px;top:376px;width:59px;height:21px;background:#2c2c2c"></div>
<div class="a" style="left:916px;top:404px;width:59px;height:21px;background:#2c2c2c"></div>
<div class="a" style="left:1131px;top:322px;width:59px;height:21px;background:#2c2c2c"></div>
<div class="a" style="left:1131px;top:349px;width:59px;height:21px;background:#2c2c2c"></div>
<div class="a" style="left:1131px;top:404px;width:59px;height:21px;background:#2c2c2c"></div>
<div class="t" style="left:920px;top:327px;font-size:11px">100%</div>
<div class="t" style="left:920px;top:354px;font-size:11px">100%</div>
<div class="t" style="left:920px;top:382px;font-size:11px">50%</div>
<div class="t" style="left:920px;top:410px;font-size:11px">50%</div>
<div class="t" style="left:1135px;top:327px;font-size:11px">0°</div>
<div class="t" style="left:1135px;top:354px;font-size:11px">0°</div>
<div class="t" style="left:1135px;top:410px;font-size:11px">0°</div>
<svg style="left:0;top:0" width="1200" height="700"><g fill="#dcdcdc">
<path d="M883,237.5 l4,4 l-4,4 l-4,-4 Z"/><path d="M883,264.5 l4,4 l-4,4 l-4,-4 Z"/>
<path d="M1074,237.5 l4,4 l-4,4 l-4,-4 Z"/><path d="M1074,264.5 l4,4 l-4,4 l-4,-4 Z"/>
<path d="M901,327.5 l4,4 l-4,4 l-4,-4 Z"/><path d="M901,354.5 l4,4 l-4,4 l-4,-4 Z"/><path d="M901,382 l4,4 l-4,4 l-4,-4 Z"/><path d="M901,409.5 l4,4 l-4,4 l-4,-4 Z"/>
<path d="M1117,327.5 l4,4 l-4,4 l-4,-4 Z"/><path d="M1117,354.5 l4,4 l-4,4 l-4,-4 Z"/><path d="M1117,409.5 l4,4 l-4,4 l-4,-4 Z"/>
</g></svg>
<!-- fill / border -->
<div class="a" style="left:842px;top:435px;width:358px;height:1px;background:#262626"></div>
<div class="a" style="left:847px;top:436px;width:353px;height:23px;background:#4d4d4d;border-top:1px solid #565656"></div>
<div class="a" style="left:842px;top:459px;width:358px;height:1px;background:#262626"></div>
<div class="a" style="left:847px;top:460px;width:353px;height:23px;background:#4d4d4d;border-top:1px solid #565656"></div>
<div class="t" style="left:865px;top:442px;font-size:11px">Fill</div>
<div class="t" style="left:865px;top:466px;font-size:11px">Border</div>
<div class="a" style="left:842px;top:483px;width:358px;height:1px;background:#2e2e2e"></div>
<!-- bottom tabs -->
<div class="a" style="left:842px;top:656px;width:358px;height:23px;background:#3e3e3e;border-top:1px solid #2e2e2e"></div>
<div class="a" style="left:842px;top:657px;width:122px;height:22px;background:#3a3a3a"></div>
<div class="a" style="left:842px;top:657px;width:121px;height:22px;overflow:hidden"><div class="t" style="left:1px;top:5px;font-size:11px;color:#e8e8e8">Properties - car (Group)</div></div>
<div class="a" style="left:964px;top:657px;width:59px;height:22px;background:#494949;border-left:1px solid #2e2e2e;border-right:1px solid #2e2e2e"></div>
<div class="t" style="left:968px;top:662px;font-size:11px;color:#a8a8a8">Resources</div>

<!-- timeline -->
<div class="a" style="left:0;top:508px;width:841px;height:2px;background:#222"></div>
<div class="a" style="left:0;top:510px;width:841px;height:29px;background:#4a4a4a"></div>
<div class="t b" style="left:5px;top:519px;font-size:12px;color:#f2f2f2">Timeline (Main Timeline)</div>
<svg style="left:0;top:510px" width="841" height="29" viewBox="0 510 841 29">
<g fill="none" stroke="#e8e8e8" stroke-width="1.5">
<path d="M171,522 L174,525 L177,522" stroke="#888" stroke-width="1.2"/>
<path d="M195,517.5 V531.5 M188,524.5 H202" stroke-width="1.8"/>
<path d="M219.5,519.5 L229.5,529.5 M229.5,519.5 L219.5,529.5" stroke="#5a5a5a" stroke-width="1.8"/>
<path d="M245,518 H250 M247.5,518 V531 M245,531 H250 M251,518.5 H261 M256,518.5 V531" stroke-width="1.6"/>
</g>
<path d="M282,517 L284.2,522.2 L289.5,522.4 L285.3,525.8 L286.8,531 L282,528 L277.2,531 L278.7,525.8 L274.5,522.4 L279.8,522.2 Z" fill="#5a5a5a"/>
<path d="M307.5,512 V538" stroke="#2e2e2e" stroke-width="1"/>
<g fill="none" stroke="#e0e0e0" stroke-width="1.4">
<path d="M325.5,518.5 V530.5 M335.5,518.5 L328,524.5 L335.5,530.5 Z"/>
<path d="M394.5,518.5 V530.5 M383.5,518.5 L391,524.5 L383.5,530.5 Z"/>
<path d="M411.5,525 V518.5 H425.5 V529.5 H417" />
<path d="M419,527 L416.5,529.5 L419,532"/>
</g>
<path d="M353,516 L367,524.5 L353,533 Z" fill="#d8d8d8"/>
<path d="M443.5,512 V538" stroke="#2e2e2e" stroke-width="1"/>
<g fill="none" stroke="#e0e0e0" stroke-width="1">
<path d="M459.5,517 V532.5 H474 M457,529.5 H474 M462.5,517 V532.5" stroke="#aaa"/>
<path d="M460,530.5 C463,522 468,518 473,517" stroke-width="1.6"/>
</g>
</svg>
<!-- left pane -->
<div class="a" style="left:0;top:539px;width:841px;height:141px;background:#333"></div>
<div class="a" style="left:0;top:539px;width:6px;height:139px;background:#2c2c2c"></div>
<div class="a" style="left:6px;top:583px;width:299px;height:17px;background:#242424"></div>
<svg style="left:0;top:539px" width="310" height="62" viewBox="0 539 310 62">
<path d="M291,573 L299,568.5 V578.5 Z" fill="#e8e8e8"/>
<path d="M18.5,586 H29.5 L24,590.5 Z M18.5,596 H29.5 L24,591.5 Z" fill="#e0e0e0"/>
<path d="M18.5,586 H29.5 M18.5,596.5 H29.5" stroke="#e0e0e0" stroke-width="1"/>
</svg>
<div class="t" style="left:137px;top:586px;font-size:11px;color:#e8e8e8">Actions</div>
<!-- rows -->
<div class="a" style="left:6px;top:600px;width:299px;height:20px;background:#6b6b6b"></div>
<div class="a" style="left:6px;top:620px;width:299px;height:1px;background:#2e2e2e"></div>
<div class="a" style="left:6px;top:621px;width:299px;height:19px;background:#5e5e5e"></div>
<div class="a" style="left:6px;top:640px;width:299px;height:1px;background:#2e2e2e"></div>
<div class="a" style="left:6px;top:641px;width:34px;height:19px;background:#3a3a3a"></div>
<div class="a" style="left:40px;top:641px;width:265px;height:19px;background:#6b6b6b"></div>
<div class="a" style="left:6px;top:660px;width:299px;height:1px;background:#2e2e2e"></div>
<div class="a" style="left:6px;top:661px;width:299px;height:17px;background:#464646"></div>
<div class="a" style="left:6px;top:600px;width:6px;height:20px;background:#f2e030"></div>
<div class="a" style="left:6px;top:620px;width:6px;height:41px;background:#6a3fc0"></div>
<div class="a" style="left:6px;top:661px;width:6px;height:17px;background:#1aa6a0"></div>
<div class="t" style="left:34px;top:604px;font-size:11px">Scene_1</div>
<div class="t" style="left:34px;top:624px;font-size:11px">car</div>
<div class="t" style="left:45px;top:645px;font-size:11px">Left</div>
<div class="t" style="left:173px;top:645px;font-size:11px">295</div>
<div class="t" style="left:41px;top:664px;font-size:11px">car_body</div>
<svg style="left:0;top:580px" width="310" height="100" viewBox="0 580 310 100">
<g fill="#e0e0e0">
<path d="M20,608 H28 L24,612 Z"/><path d="M20,628 H28 L24,632 Z"/><path d="M20,668 H28 L24,672 Z"/>
<path d="M34,667 L36.5,669.5 L34,672" stroke="#aaa" fill="none"/>
</g>
<g id="eye"><path d="M229.5,591 C232,587 242,587 244.5,591 C242,595 232,595 229.5,591 Z" fill="#e0e0e0"/><circle cx="237" cy="591" r="2.2" fill="#242424"/></g>
<path d="M229.5,630 C232,626 242,626 244.5,630 C242,634 232,634 229.5,630 Z" fill="#d8d8d8"/><circle cx="237" cy="630" r="2.2" fill="#5e5e5e"/>
<path d="M229.5,670 C232,666 242,666 244.5,670 C242,674 232,674 229.5,670 Z" fill="#d8d8d8"/><circle cx="237" cy="670" r="2.2" fill="#464646"/>
<g fill="#e0e0e0">
<rect x="251" y="590" width="9" height="7"/><rect x="251" y="629" width="9" height="7"/><rect x="251" y="669" width="9" height="7"/>
</g>
<g fill="none" stroke="#e0e0e0" stroke-width="1.4">
<path d="M253,590 V587 A2.5,2.5 0 0 1 258,587 V590"/>
<path d="M253,629 V626 A2.5,2.5 0 0 1 258,626"/>
<path d="M253,669 V666 A2.5,2.5 0 0 1 258,666"/>
</g>
<g fill="#d0d0d0">
<path d="M278,585 L273,592 H276 L274,598 L279.5,590 H276.5 Z"/>
<path d="M278,604 L273,611 H276 L274,617 L279.5,609 H276.5 Z"/>
<path d="M278,624 L273,631 H276 L274,637 L279.5,629 H276.5 Z"/>
<path d="M278,664 L273,671 H276 L274,677 L279.5,669 H276.5 Z"/>
</g>
<path d="M295,585.5 L300.5,591 L295,596.5 L289.5,591 Z" fill="none" stroke="#e0e0e0" stroke-width="1.3"/>
<path d="M295,588.5 L297.5,591 L295,593.5 L292.5,591 Z" fill="#e0e0e0"/>
<path d="M295,647 L298.5,650.5 L295,654 L291.5,650.5 Z" fill="#d8d8d8"/>
</svg>
<!-- track area -->
<div class="a" style="left:305px;top:539px;width:181px;height:141px;background:#333"></div>
<div class="a" style="left:305px;top:539px;width:1px;height:139px;background:#262626"></div>
<div class="a" style="left:305px;top:583px;width:181px;height:17px;background:#242424"></div>
<div class="a" style="left:312px;top:600px;width:174px;height:20px;background:#6c6c6c"></div>
<div class="a" style="left:312px;top:621px;width:174px;height:19px;background:#6a6a6a"></div>
<div class="a" style="left:312px;top:621px;width:150px;height:7px;background:#636b70"></div>
<div class="a" style="left:312px;top:628px;width:150px;height:12px;background:#b35a00"></div>
<div class="a" style="left:305px;top:641px;width:181px;height:19px;background:#3a3a3a"></div>
<div class="a" style="left:312px;top:642px;width:150px;height:18px;background:#573a8a;border-top:1px solid #c8907a;border-bottom:1px solid #c8907a"></div>
<div class="a" style="left:305px;top:661px;width:181px;height:17px;background:#3d3d3d"></div>
<div class="a" style="left:312px;top:664px;width:174px;height:10px;background:#454545"></div>
<div class="t" style="left:318px;top:646px;font-size:11px;color:#f0f0f0">-246px</div>
<div class="t" style="left:425px;top:646px;font-size:11px;color:#f0f0f0">295px</div>
<svg style="left:300px;top:536px" width="186" height="144" viewBox="300 536 186 144">
<g font-family="Liberation Sans" font-size="11" fill="#d0d0d0">
<text x="305" y="550">0:00</text><text x="350" y="550">00:01</text><text x="400" y="550">00:02</text><text x="449" y="550">00:03</text>
</g>
<path d="M306,563.5 H486" stroke="#888" stroke-width="1"/>
<g stroke="#777" stroke-width="1">
<path d="M315.5,556 V563 M322.5,560 V563 M327.5,560 V563 M333.5,558 V563 M339.5,560 V563 M345.5,560 V563 M355.5,560 V563 M361.5,556 V563 M367.5,560 V563 M374.5,560 V563 M381.5,558 V563 M389.5,560 V563 M395.5,560 V563 M404.5,560 V563 M411.5,556 V563 M418.5,560 V563 M424.5,560 V563 M430.5,558 V563 M437.5,560 V563 M444.5,560 V563 M451.5,560 V563 M468.5,560 V563 M475.5,560 V563 M481.5,558 V563"/>
</g>
<path d="M462.5,562 V660" stroke="#e8201e" stroke-width="1"/>
<path d="M457,548 H467 V558 L462,562 L457,558 Z" fill="#f39200"/>
<path d="M312,646 L316.5,650.5 L312,655 L307.5,650.5 Z" fill="#f5e100" stroke="#444" stroke-width="0.6"/>
<path d="M462,646 L466.5,650.5 L462,655 L457.5,650.5 Z" fill="#f5e100" stroke="#444" stroke-width="0.6"/><path d="M462.5,645 V656" stroke="#e0201e" stroke-width="1"/>
<path d="M315,666 L312,669 L315,672" stroke="#aaa" fill="none" stroke-width="1.2"/>
</svg>
<div class="a" style="left:0;top:678px;width:841px;height:2px;background:#262626"></div>

<!-- easing popup -->
<div class="a" style="left:486px;top:440px;width:378px;height:250px;background:#3a3a3a;border:1px solid #4a4a4a;border-bottom-color:#262626"></div>
<div class="a" style="left:487px;top:441px;width:376px;height:24px;background:#3e3e3e"></div>
<div class="a" style="left:487px;top:465px;width:376px;height:2px;background:#303030"></div>
<div class="t b" style="left:626px;top:450px;font-size:11.5px;color:#f0f0f0">Easing Animation</div>
<div class="a" style="left:497px;top:478px;width:150px;height:202px;background:#333;border:1px solid #2e2e2e"></div>
<div class="a" style="left:631px;top:479px;width:15px;height:200px;background:#2b2b2b"></div>
<div class="a" style="left:633px;top:494px;width:10px;height:32px;background:#565656"></div>
<svg style="left:631px;top:479px" width="15" height="200"><path d="M3.5,9 L7.5,5 L11.5,9" fill="none" stroke="#aaa" stroke-width="1"/><path d="M3.5,190 L7.5,194 L11.5,190" fill="none" stroke="#aaa" stroke-width="1"/></svg>
<div class="a" style="left:498px;top:527px;width:133px;height:24px;background:#626262"></div>
<svg style="left:497px;top:478px" width="134" height="202" viewBox="497 478 134 202"><g stroke="#2c2c2c" stroke-width="1"><path d="M498,502.5 H631 M498,527 H631 M498,551.5 H631 M498,576 H631 M498,600.5 H631 M498,625 H631 M498,649.5 H631 M498,674 H631"/></g><path d="M507.5,484.0 V496.5 M507.5,492.5 H517.0 M507.5,484.0 V496.5 M511.5,484.0 V496.5 M515.5,484.0 V496.5 M505,488.0 H517 M505,492.0 H517" stroke="#5a5a5a" stroke-width="0.8" fill="none"/><path d="M504.5,483.0 V498.5 M502.0,496.5 H517.5" stroke="#d8d8d8" stroke-width="1" fill="none"/><path d="M507.5,492.5 l8,-8" transform="translate(0,0)" stroke="#f2f2f2" stroke-width="1.8" fill="none" stroke-linecap="round"/><path d="M507.5,508.5 V521.0 M507.5,517.0 H517.0 M507.5,508.5 V521.0 M511.5,508.5 V521.0 M515.5,508.5 V521.0 M505,512.5 H517 M505,516.5 H517" stroke="#5a5a5a" stroke-width="0.8" fill="none"/><path d="M504.5,507.5 V523.0 M502.0,521.0 H517.5" stroke="#d8d8d8" stroke-width="1" fill="none"/><path d="M507.5,517.0 q6,0 8,-8" transform="translate(0,0)" stroke="#f2f2f2" stroke-width="1.8" fill="none" stroke-linecap="round"/><path d="M507.5,533.0 V545.5 M507.5,541.5 H517.0 M507.5,533.0 V545.5 M511.5,533.0 V545.5 M515.5,533.0 V545.5 M505,537.0 H517 M505,541.0 H517" stroke="#7a7a7a" stroke-width="0.8" fill="none"/><path d="M504.5,532.0 V547.5 M502.0,545.5 H517.5" stroke="#8aa8c0" stroke-width="1" fill="none"/><path d="M507.5,541.5 q0,-7 8,-8" transform="translate(0,0)" stroke="#9cc4e4" stroke-width="1.8" fill="none" stroke-linecap="round"/><path d="M507.5,557.5 V570.0 M507.5,566.0 H517.0 M507.5,557.5 V570.0 M511.5,557.5 V570.0 M515.5,557.5 V570.0 M505,561.5 H517 M505,565.5 H517" stroke="#5a5a5a" stroke-width="0.8" fill="none"/><path d="M504.5,556.5 V572.0 M502.0,570.0 H517.5" stroke="#d8d8d8" stroke-width="1" fill="none"/><path d="M507.5,566.0 c6,0 2,-8 8,-8" transform="translate(0,0)" stroke="#f2f2f2" stroke-width="1.8" fill="none" stroke-linecap="round"/><path d="M507.5,582.0 V594.5 M507.5,590.5 H517.0 M507.5,582.0 V594.5 M511.5,582.0 V594.5 M515.5,582.0 V594.5 M505,586.0 H517 M505,590.0 H517" stroke="#5a5a5a" stroke-width="0.8" fill="none"/><path d="M504.5,581.0 V596.5 M502.0,594.5 H517.5" stroke="#d8d8d8" stroke-width="1" fill="none"/><path d="M507.5,590.5 c0,-7 8,-1 8,-8" transform="translate(0,0)" stroke="#f2f2f2" stroke-width="1.8" fill="none" stroke-linecap="round"/><path d="M507.5,606.5 V619.0 M507.5,615.0 H517.0 M507.5,606.5 V619.0 M511.5,606.5 V619.0 M515.5,606.5 V619.0 M505,610.5 H517 M505,614.5 H517" stroke="#5a5a5a" stroke-width="0.8" fill="none"/><path d="M504.5,605.5 V621.0 M502.0,619.0 H517.5" stroke="#d8d8d8" stroke-width="1" fill="none"/><path d="M507.5,615.0 c7,0 8,-3 8,-8" transform="translate(0,0)" stroke="#f2f2f2" stroke-width="1.8" fill="none" stroke-linecap="round"/><path d="M507.5,631.0 V643.5 M507.5,639.5 H517.0 M507.5,631.0 V643.5 M511.5,631.0 V643.5 M515.5,631.0 V643.5 M505,635.0 H517 M505,639.0 H517" stroke="#5a5a5a" stroke-width="0.8" fill="none"/><path d="M504.5,630.0 V645.5 M502.0,643.5 H517.5" stroke="#d8d8d8" stroke-width="1" fill="none"/><path d="M507.5,639.5 c0,-6 2,-8 8,-8" transform="translate(0,0)" stroke="#f2f2f2" stroke-width="1.8" fill="none" stroke-linecap="round"/><path d="M507.5,655.5 V668.0 M507.5,664.0 H517.0 M507.5,655.5 V668.0 M511.5,655.5 V668.0 M515.5,655.5 V668.0 M505,659.5 H517 M505,663.5 H517" stroke="#5a5a5a" stroke-width="0.8" fill="none"/><path d="M504.5,654.5 V670.0 M502.0,668.0 H517.5" stroke="#d8d8d8" stroke-width="1" fill="none"/><path d="M507.5,664.0 c7,0 1,-8 8,-8" transform="translate(0,0)" stroke="#f2f2f2" stroke-width="1.8" fill="none" stroke-linecap="round"/><path d="M507.5,680.0 V692.5 M507.5,688.5 H517.0 M507.5,680.0 V692.5 M511.5,680.0 V692.5 M515.5,680.0 V692.5 M505,684.0 H517 M505,688.0 H517" stroke="#5a5a5a" stroke-width="0.8" fill="none"/><path d="M504.5,679.0 V694.5 M502.0,692.5 H517.5" stroke="#d8d8d8" stroke-width="1" fill="none"/></svg>
<div class="t" style="left:524px;top:486px;font-size:11.7px;color:#eee">Linear</div>
<div class="t" style="left:524px;top:510px;font-size:11.7px;color:#eee">InQuad</div>
<div class="t" style="left:524px;top:535px;font-size:11.7px;color:#f4f4f4">OutQuad</div>
<div class="t" style="left:524px;top:559px;font-size:11.7px;color:#eee">InOutQuad</div>
<div class="t" style="left:524px;top:583px;font-size:11.7px;color:#eee">OutInQuad</div>
<div class="t" style="left:524px;top:607px;font-size:11.7px;color:#eee">InCubic</div>
<div class="t" style="left:524px;top:631px;font-size:11.7px;color:#eee">OutCubic</div>
<div class="t" style="left:524px;top:655px;font-size:11.7px;color:#eee">InOutCubic</div>
<!-- graph -->
<svg style="left:650px;top:470px" width="214" height="218" viewBox="650 470 214 218">
<g stroke="#686868" stroke-width="1">
<path d="M720.5,495 V631 M753.5,495 V631 M786.5,495 V631 M819.5,495 V631"/>
<path d="M704,512.5 H839 M704,545.5 H839 M704,579.5 H839 M704,612.5 H839"/>
</g>
<g stroke="#cfcfcf" stroke-width="1.2">
<path d="M687.5,494 V671 M661,645.5 H839"/>
</g>
<path d="M720.5,612.5 Q770,512.5 819.5,512.5" fill="none" stroke="#ececec" stroke-width="2"/>
<circle cx="819.5" cy="512.5" r="4.2" fill="#cfcfcf" stroke="#eee" stroke-width="0.8"/>
<rect x="837" y="506" width="12" height="12" fill="#dcdcdc"/>
</svg>

<!-- status bar -->
<div class="a" style="left:0;top:680px;width:1200px;height:20px;background:#3a3a3a"></div>
<div class="a" style="left:486px;top:689px;width:378px;height:1px;background:#262626"></div>
<div class="t" style="left:893px;top:685px;font-size:10.5px;color:#e8e8e8">Canvas Zoom</div>
<div class="a" style="left:970px;top:689px;width:8px;height:2px;background:#ddd"></div>
<div class="a" style="left:988px;top:688px;width:101px;height:3px;background:#1e1e1e"></div>
<div class="a" style="left:1009px;top:682px;width:13px;height:13px;border-radius:50%;background:#9a9a9a"></div>
<svg style="left:1098px;top:683px" width="12" height="12"><path d="M6,1 V11 M1,6 H11" stroke="#e0e0e0" stroke-width="1.8"/></svg>
<div class="t" style="left:1133px;top:685px;font-size:11px;color:#e8e8e8">54%</div>
<svg style="left:1178px;top:682px" width="15" height="15"><path d="M1,4.5 V1 H4.5 M10.5,1 H14 V4.5 M14,10.5 V14 H10.5 M4.5,14 H1 V10.5" fill="none" stroke="#ddd" stroke-width="1.3"/><rect x="4.5" y="4.5" width="6" height="6" fill="none" stroke="#ddd" stroke-width="1.3"/></svg>

</body></html>
